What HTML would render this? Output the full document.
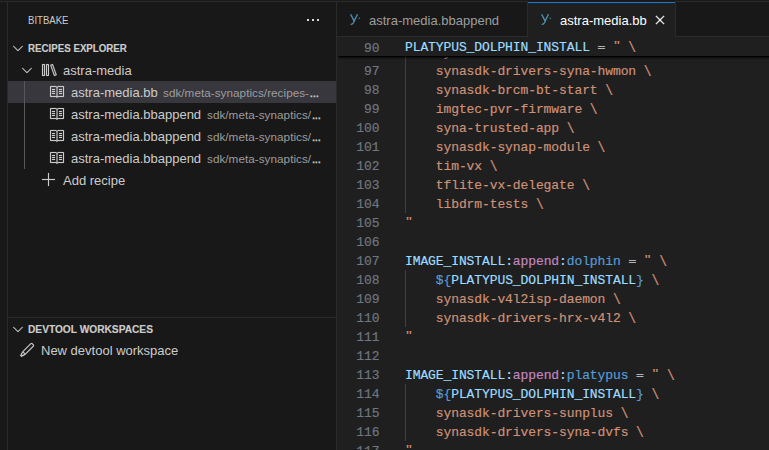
<!DOCTYPE html>
<html lang="en">
<head>
<meta charset="utf-8">
<title>astra-media.bb - BitBake</title>
<style>
*{box-sizing:border-box;margin:0;padding:0}
html,body{width:769px;height:450px;overflow:hidden;background:#181818}
body{position:relative;font-family:"Liberation Sans",sans-serif;font-size:13px;color:#ccc;-webkit-font-smoothing:antialiased}
.abs{position:absolute}
#top0{left:0;top:0;width:769px;height:1px;background:#191919}
#top1{left:0;top:1px;width:769px;height:1px;background:#2b2b2b}
#actb{left:7px;top:2px;width:1px;height:448px;background:#2b2b2b}
#sideb{left:336px;top:2px;width:1px;height:448px;background:#2b2b2b}
#sidebar{left:8px;top:2px;width:328px;height:448px;background:#181818}
.row{position:absolute;left:0;width:328px;height:22px;line-height:22px;white-space:nowrap}
.row span{position:absolute;top:1px}
.hdr span{top:0;transform-origin:0 50%;transform:scaleX(.884)}
.hdr{font-size:11px;font-weight:700;color:#ccc;-webkit-text-stroke:.15px}
.sel{background:#37373d}
.desc{font-size:11.7px;color:#9d9d9d;letter-spacing:.045px}
.row span.desc{top:1px}
.el{position:relative;top:0;font-weight:400;font-size:13px;color:#ccc;letter-spacing:-.7px;margin-left:.5px;-webkit-text-stroke:.3px}
#editor{left:337px;top:2px;width:432px;height:448px;background:#1f1f1f}
#tabs{left:0;top:0;width:432px;height:35px;background:#181818;border-bottom:1px solid #2b2b2b}
.tab{position:absolute;top:0;height:35px;line-height:35px;white-space:nowrap}
.tab span{position:absolute;top:1px}
#code{font-family:"Liberation Mono",monospace;font-size:13px;letter-spacing:-0.1px;-webkit-text-stroke:.18px}
.ln{position:absolute;left:0;width:432px;height:19px;line-height:19px;white-space:pre}
.ln .n{position:absolute;left:0;width:42.4px;text-align:right;color:#6e7681}
.ln .c{position:absolute;left:68px}
.stk{background:#1f1f1f;z-index:5}
.shd{position:absolute;left:2px;top:19px;width:430px;height:4px;z-index:6;background:linear-gradient(rgba(0,0,0,.96) 0,rgba(0,0,0,.96) 1px,rgba(0,0,0,.5) 1px,rgba(0,0,0,.5) 2px,rgba(0,0,0,.24) 2px,rgba(0,0,0,.24) 3px,rgba(0,0,0,.07) 3px,rgba(0,0,0,.07) 4px)}
.shd:before{content:"";position:absolute;left:-1px;top:0;width:1px;height:4px;background:linear-gradient(rgba(0,0,0,.45) 0,rgba(0,0,0,.45) 1px,rgba(0,0,0,.22) 1px,rgba(0,0,0,.22) 2px,rgba(0,0,0,.08) 2px,rgba(0,0,0,.08) 3px,transparent 3px)}
.stk span.n{top:2px}
.stk span.c{top:1px}
.guide{position:absolute;width:1px;background:#404040;left:68px}
.ic{position:absolute;display:block;overflow:visible}
.eq{-webkit-text-stroke:.4px;display:inline-block;transform-origin:50% 50%;transform:translateY(.2px) scaleY(.75)}
.bs{display:inline-block;transform-origin:50% 25%;transform:translateY(-.7px) scaleY(1.19)}
.q{display:inline-block;transform-origin:50% 28%;transform:translateY(-1px) scaleY(.75)}
.v{color:#9cdcfe}.s{color:#ce9178}.k{color:#c586c0}.o{color:#d4d4d4}.b{color:#569cd6}
</style>
</head>
<body>
<div class="abs" id="top0"></div>
<div class="abs" id="top1"></div>
<div class="abs" style="left:528px;top:1px;width:147px;height:1px;background:#171a1e;z-index:3"></div>
<div class="abs" id="actb"></div>
<div class="abs" id="sidebar">
  <div class="row" style="top:0;height:35px;line-height:35px"><span style="left:20px;font-size:11px;transform-origin:0 50%;transform:scaleX(.87)">BITBAKE</span></div>
  <div class="row hdr" style="top:35px"><span style="left:20px">RECIPES EXPLORER</span></div>
  <div class="row" style="top:57px"><span style="left:55px">astra-media</span></div>
  <div class="row sel" style="top:79px"><span style="left:63px">astra-media.bb</span><span class="desc" style="left:155px">sdk/meta-synaptics/recipes-<b class="el">...</b></span></div>
  <div class="row" style="top:101px"><span style="left:63px">astra-media.bbappend</span><span class="desc" style="left:199px">sdk/meta-synaptics/<b class="el">...</b></span></div>
  <div class="row" style="top:123px"><span style="left:63px">astra-media.bbappend</span><span class="desc" style="left:199px">sdk/meta-synaptics/<b class="el">...</b></span></div>
  <div class="row" style="top:145px"><span style="left:63px">astra-media.bbappend</span><span class="desc" style="left:199px">sdk/meta-synaptics/<b class="el">...</b></span></div>
  <div class="row" style="top:167px"><span style="left:55px">Add recipe</span></div>
  <div class="abs" style="left:0;top:315px;width:328px;height:1px;background:#2b2b2b"></div>
  <div class="row hdr" style="top:316px"><span style="left:20px;transform:scaleX(.925)">DEVTOOL WORKSPACES</span></div>
  <div class="row" style="top:338px"><span style="left:33px;top:0">New devtool workspace</span></div>
<svg class="ic" style="left:297px;top:10px" width="16" height="16" viewBox="0 0 16 16"><path fill="#dadada" d="M2 7h2v2H2zM7 7h2v2H7zM12 7h2v2h-2z"/></svg><svg class="ic" style="left:2px;top:38px" width="16" height="16" viewBox="0 0 16 16"><path fill="#ccc" stroke="#ccc" stroke-width=".15" d="M7.976 10.072l4.357-4.357.62.618L8.284 11h-.618L3 6.333l.619-.618 4.357 4.357z"/></svg><svg class="ic" style="left:11px;top:60px" width="16" height="16" viewBox="0 0 16 16"><path fill="#ccc" stroke="#ccc" stroke-width=".15" d="M7.976 10.072l4.357-4.357.62.618L8.284 11h-.618L3 6.333l.619-.618 4.357 4.357z"/></svg><svg class="ic" style="left:33px;top:60px" width="16" height="16" viewBox="0 0 16 16"><path fill="#ccc" stroke="#ccc" stroke-width=".15" fill-rule="evenodd" d="M5 2.5l.5-.5h2l.5.5v11l-.5.5h-2l-.5-.5v-11zM6 3v10h1V3H6zm3.171.345l.299-.641 1.88-.684.64.299 3.762 10.336-.299.641-1.879.684-.64-.299L9.17 3.345zm1.11.128l3.42 9.396.94-.341-3.42-9.397-.94.342zM1 2.5l.5-.5h2l.5.5v11l-.5.5h-2l-.5-.5v-11zM2 3v10h1V3H2z"/></svg><svg class="ic" style="left:41px;top:82px" width="16" height="16" viewBox="0 0 16 16"><path fill="#ccc" stroke="#ccc" stroke-width=".15" fill-rule="evenodd" d="M14.5 2H9l-.35.15-.65.64-.65-.64L7 2H1.5l-.5.5v10l.5.5h5.29l.86.85h.7l.86-.85h5.29l.5-.5v-10l-.5-.5zm-7 10.32l-.18-.17L7 12H2V3h4.79l.74.74-.03 8.58zM14 12H9l-.35.15-.14.13V3.700l.7-.7H14v9zM6 5H3v1h3V5zm0 4H3v1h3V9zM3 7h3v1H3V7zm10-2h-3v1h3V5zm-3 2h3v1h-3V7zm0 2h3v1h-3V9z"/></svg><svg class="ic" style="left:41px;top:104px" width="16" height="16" viewBox="0 0 16 16"><path fill="#ccc" stroke="#ccc" stroke-width=".15" fill-rule="evenodd" d="M14.5 2H9l-.35.15-.65.64-.65-.64L7 2H1.5l-.5.5v10l.5.5h5.29l.86.85h.7l.86-.85h5.29l.5-.5v-10l-.5-.5zm-7 10.32l-.18-.17L7 12H2V3h4.79l.74.74-.03 8.58zM14 12H9l-.35.15-.14.13V3.700l.7-.7H14v9zM6 5H3v1h3V5zm0 4H3v1h3V9zM3 7h3v1H3V7zm10-2h-3v1h3V5zm-3 2h3v1h-3V7zm0 2h3v1h-3V9z"/></svg><svg class="ic" style="left:41px;top:126px" width="16" height="16" viewBox="0 0 16 16"><path fill="#ccc" stroke="#ccc" stroke-width=".15" fill-rule="evenodd" d="M14.5 2H9l-.35.15-.65.64-.65-.64L7 2H1.5l-.5.5v10l.5.5h5.29l.86.85h.7l.86-.85h5.29l.5-.5v-10l-.5-.5zm-7 10.32l-.18-.17L7 12H2V3h4.79l.74.74-.03 8.58zM14 12H9l-.35.15-.14.13V3.700l.7-.7H14v9zM6 5H3v1h3V5zm0 4H3v1h3V9zM3 7h3v1H3V7zm10-2h-3v1h3V5zm-3 2h3v1h-3V7zm0 2h3v1h-3V9z"/></svg><svg class="ic" style="left:41px;top:148px" width="16" height="16" viewBox="0 0 16 16"><path fill="#ccc" stroke="#ccc" stroke-width=".15" fill-rule="evenodd" d="M14.5 2H9l-.35.15-.65.64-.65-.64L7 2H1.5l-.5.5v10l.5.5h5.29l.86.85h.7l.86-.85h5.29l.5-.5v-10l-.5-.5zm-7 10.32l-.18-.17L7 12H2V3h4.79l.74.74-.03 8.58zM14 12H9l-.35.15-.14.13V3.700l.7-.7H14v9zM6 5H3v1h3V5zm0 4H3v1h3V9zM3 7h3v1H3V7zm10-2h-3v1h3V5zm-3 2h3v1h-3V7zm0 2h3v1h-3V9z"/></svg><svg class="ic" style="left:33px;top:170px" width="16" height="16" viewBox="0 0 16 16"><path fill="#ccc" stroke="#ccc" stroke-width=".15" d="M14 7v1H8v6H7V8H1V7h6V1h1v6h6z"/></svg><svg class="ic" style="left:2px;top:319px" width="16" height="16" viewBox="0 0 16 16"><path fill="#ccc" stroke="#ccc" stroke-width=".15" d="M7.976 10.072l4.357-4.357.62.618L8.284 11h-.618L3 6.333l.619-.618 4.357 4.357z"/></svg><svg class="ic" style="left:11px;top:340px" width="16" height="16" viewBox="0 0 16 16"><path fill="#ccc" stroke="#ccc" stroke-width=".15" d="M13.23 1h-1.46L3.520 9.250l-.16.22L1 13.590 2.410 15l4.120-2.360.22-.16L15 4.230V2.770L13.230 1zM2.410 13.590l1.510-3 1.450 1.450-2.960 1.550zm3.830-2.060L4.470 9.760l8-8 1.770 1.770-8 8z"/></svg><div class="abs" style="left:16px;top:79px;width:1px;height:88px;background:#585858"></div>
</div>
<div class="abs" id="sideb"></div>
<div class="abs" id="editor">
  <div class="abs" id="tabs">
    <div class="tab" style="left:0;width:191px;border-right:1px solid #2b2b2b;color:#9d9d9d"><span style="left:32px">astra-media.bbappend</span></div>
    <div class="tab" style="left:191px;width:148px;background:#1f1f1f;border-right:1px solid #2b2b2b;color:#fff;height:36px"><i class="abs" style="left:0;top:0;width:147px;height:1px;background:#3b6f9e"></i><i class="abs" style="left:0;top:1px;width:147px;height:1px;background:#012a52"></i><span style="left:32px">astra-media.bb</span></div>
  </div>
  <svg class="ic" style="left:11px;top:10px" width="16" height="16" viewBox="0 0 16 16"><path fill="none" stroke="#5190b0" stroke-width="1.35" stroke-linecap="round" stroke-linejoin="round" d="M2.900 2.700L6.300 9.400M9.150 2.700L5.400 10.800Q4.600 12.300 3.100 12.300"/><circle cx="11.200" cy="6.200" r=".7" fill="#5190b0"/></svg><svg class="ic" style="left:202px;top:10px" width="16" height="16" viewBox="0 0 16 16"><path fill="none" stroke="#5190b0" stroke-width="1.35" stroke-linecap="round" stroke-linejoin="round" d="M2.900 2.700L6.300 9.400M9.150 2.700L5.400 10.800Q4.600 12.300 3.100 12.300"/><circle cx="11.200" cy="6.200" r=".7" fill="#5190b0"/></svg><svg class="ic" style="left:315.1px;top:10px" width="16" height="16" viewBox="0 0 16 16"><path fill="#fff" stroke="#fff" stroke-width=".25" d="M8 8.707l3.646 3.647.708-.707L8.707 8l3.647-3.646-.707-.708L8 7.293 4.354 3.646l-.707.708L7.293 8l-3.646 3.646.707.708L8 8.707z"/></svg>
  <div class="abs" id="code" style="left:0;top:35px;width:432px;height:413px">
    <div class="guide" style="top:19px;height:157px"></div><div class="guide" style="top:233px;height:57px"></div><div class="guide" style="top:347px;height:57px"></div>
    <div class="ln" style="top:6px"><span class="n">96</span><span class="c s">    synasdk-hrx-video <span class="bs">\</span></span></div>
    <div class="shd"></div>
    <div class="ln stk" style="top:0"><span class="n">90</span><span class="c"><span class="v">PLATYPUS_DOLPHIN_INSTALL</span><span class="o"> <span class="eq">=</span> </span><span class="s"><span class="q">"</span> <span class="bs">\</span></span></span></div>
    <div class="ln" style="top:25px"><span class="n">97</span><span class="c s">    synasdk-drivers-syna-hwmon <span class="bs">\</span></span></div>
    <div class="ln" style="top:44px"><span class="n">98</span><span class="c s">    synasdk-brcm-bt-start <span class="bs">\</span></span></div>
    <div class="ln" style="top:63px"><span class="n">99</span><span class="c s">    imgtec-pvr-firmware <span class="bs">\</span></span></div>
    <div class="ln" style="top:82px"><span class="n">100</span><span class="c s">    syna-trusted-app <span class="bs">\</span></span></div>
    <div class="ln" style="top:101px"><span class="n">101</span><span class="c s">    synasdk-synap-module <span class="bs">\</span></span></div>
    <div class="ln" style="top:120px"><span class="n">102</span><span class="c s">    tim-vx <span class="bs">\</span></span></div>
    <div class="ln" style="top:139px"><span class="n">103</span><span class="c s">    tflite-vx-delegate <span class="bs">\</span></span></div>
    <div class="ln" style="top:158px"><span class="n">104</span><span class="c s">    libdrm-tests <span class="bs">\</span></span></div>
    <div class="ln" style="top:177px"><span class="n">105</span><span class="c s"><span class="q">"</span></span></div>
    <div class="ln" style="top:196px"><span class="n">106</span><span class="c"></span></div>
    <div class="ln" style="top:215px"><span class="n">107</span><span class="c"><span class="v">IMAGE_INSTALL</span><span class="v">:</span><span class="k">append</span><span class="v">:</span><span class="b">dolphin</span><span class="o"> <span class="eq">=</span> </span><span class="s"><span class="q">"</span> <span class="bs">\</span></span></span></div>
    <div class="ln" style="top:234px"><span class="n">108</span><span class="c"><span class="s">    </span><span class="b">${</span><span class="v">PLATYPUS_DOLPHIN_INSTALL</span><span class="b">}</span><span class="s"> <span class="bs">\</span></span></span></div>
    <div class="ln" style="top:253px"><span class="n">109</span><span class="c s">    synasdk-v4l2isp-daemon <span class="bs">\</span></span></div>
    <div class="ln" style="top:272px"><span class="n">110</span><span class="c s">    synasdk-drivers-hrx-v4l2 <span class="bs">\</span></span></div>
    <div class="ln" style="top:291px"><span class="n">111</span><span class="c s"><span class="q">"</span></span></div>
    <div class="ln" style="top:310px"><span class="n">112</span><span class="c"></span></div>
    <div class="ln" style="top:329px"><span class="n">113</span><span class="c"><span class="v">IMAGE_INSTALL</span><span class="v">:</span><span class="k">append</span><span class="v">:</span><span class="b">platypus</span><span class="o"> <span class="eq">=</span> </span><span class="s"><span class="q">"</span> <span class="bs">\</span></span></span></div>
    <div class="ln" style="top:348px"><span class="n">114</span><span class="c"><span class="s">    </span><span class="b">${</span><span class="v">PLATYPUS_DOLPHIN_INSTALL</span><span class="b">}</span><span class="s"> <span class="bs">\</span></span></span></div>
    <div class="ln" style="top:367px"><span class="n">115</span><span class="c s">    synasdk-drivers-sunplus <span class="bs">\</span></span></div>
    <div class="ln" style="top:386px"><span class="n">116</span><span class="c s">    synasdk-drivers-syna-dvfs <span class="bs">\</span></span></div>
    <div class="ln" style="top:405px"><span class="n">117</span><span class="c s"><span class="q">"</span></span></div>
  </div>
</div>
</body>
</html>
